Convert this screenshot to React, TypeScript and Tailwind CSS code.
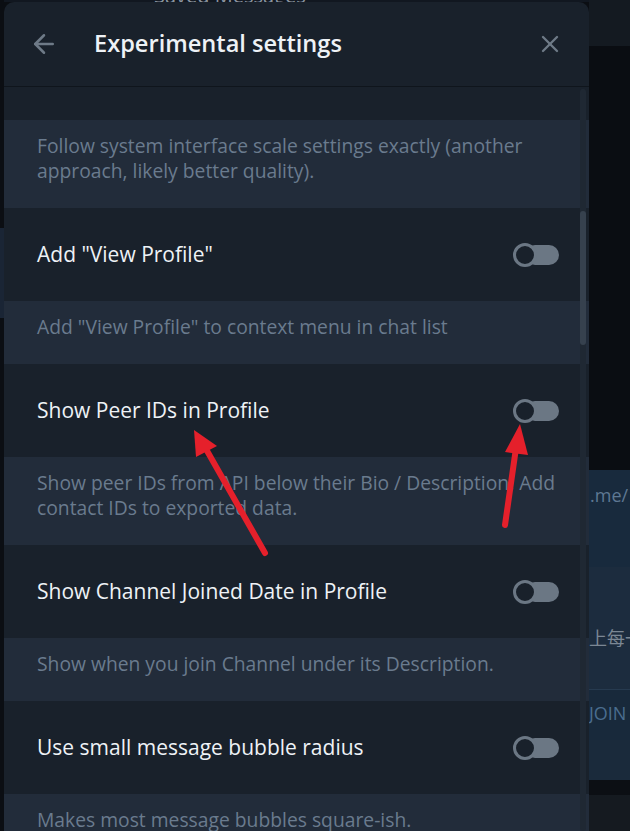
import { ArrowLeft, X } from "lucide-react";

const rows = [
  {
    title: "Add \"View Profile\"",
    desc: "Add \"View Profile\" to context menu in chat list",
  },
  {
    title: "Show Peer IDs in Profile",
    desc: "Show peer IDs from API below their Bio / Description. Add contact IDs to exported data.",
  },
  {
    title: "Show Channel Joined Date in Profile",
    desc: "Show when you join Channel under its Description.",
  },
  {
    title: "Use small message bubble radius",
    desc: "Makes most message bubbles square-ish.",
  },
];

function Toggle() {
  return (
    <div className="relative w-[46px] h-[24px] shrink-0">
      <div className="absolute left-[12px] top-[2px] w-[34px] h-[20px] rounded-full bg-[#6b7784]"></div>
      <div className="absolute left-0 top-0 w-[24px] h-[24px] rounded-full border-[3px] border-[#6b7784] bg-[#19212b]"></div>
    </div>
  );
}

function Row({ title }: { title: string }) {
  return (
    <div className="flex items-center justify-between h-[93px] pl-[33px] pr-[30px] bg-[#19212b]">
      <p className="text-[21px] text-[#eef2f6]">{title}</p>
      <Toggle />
    </div>
  );
}

function Desc({ text }: { text: string }) {
  return (
    <div className="bg-[#222c3a] pl-[33px] pr-[24px] pt-[13px] pb-[25px]">
      <p className="text-[19.3px] leading-[25px] text-[#6a7b8e]">{text}</p>
    </div>
  );
}

export default function App() {
  return (
    <div
      className="relative w-[630px] h-[831px] overflow-hidden bg-[#0b0e13] flex"
      style={{ fontFamily: "'Open Sans', 'Noto Sans CJK SC', sans-serif" }}
    >
      {/* left strip of the app behind */}
      <div className="w-[4px] shrink-0 flex flex-col">
        <div className="h-[228px] bg-[#0b0e13]"></div>
        <div className="h-[90px] bg-[#1a2535]"></div>
        <div className="flex-1 bg-[#0b0e13]"></div>
      </div>

      {/* dialog */}
      <div className="w-[585px] shrink-0 flex flex-col">
        <div className="h-[2px] bg-[#111720] overflow-hidden relative">
          <p className="absolute left-[150px] top-[-19px] text-[20px] text-[#8b95a1] whitespace-nowrap">Saved Messages</p>
        </div>
        <div className="flex-1 flex flex-col bg-[#19212b] rounded-t-[10px] overflow-hidden">
          <div className="h-[85px] shrink-0 flex items-center border-b border-[#0f151c]">
            <ArrowLeft className="ml-[25px] w-[30px] h-[30px] text-[#6e7a87]" strokeWidth={2} />
            <h1 className="ml-[35px] text-[23.6px] font-semibold text-[#eef2f6]">Experimental settings</h1>
            <X className="ml-auto mr-[25px] w-[28px] h-[28px] text-[#6e7a87]" strokeWidth={2} />
          </div>

          <div className="relative flex-1 overflow-hidden">
            <div className="mt-[-60px]">
              <Row title="Ignore system scaling" />
              <Desc text="Follow system interface scale settings exactly (another approach, likely better quality)." />
              {rows.map((r) => (
                <div key={r.title}>
                  <Row title={r.title} />
                  <Desc text={r.desc} />
                </div>
              ))}
            </div>
            {/* scrollbar */}
            <div className="absolute right-[3px] top-[2px] bottom-0 w-[6px] rounded-full bg-[#1f2833]">
              <div className="mt-[122px] h-[134px] rounded-full bg-[#36414e]"></div>
            </div>
          </div>
        </div>
      </div>

      {/* right strip of the app behind */}
      <div className="flex-1 flex flex-col overflow-hidden text-[18px] whitespace-nowrap">
        <div className="h-[46px] bg-[#141a21]"></div>
        <div className="h-[424px] bg-[#0a0d12]"></div>
        <div className="h-[97px] bg-[#182a3d] pl-[1px] pt-[12px] text-[#5e7893]">.me/</div>
        <div className="h-[123px] bg-[#1c2c3e] pt-[58px] text-[#7b8794] border-b border-[#263a4f]">上每一</div>
        <div className="h-[50px] bg-[#18293b] pt-[10px] text-[#4a6d8f]">JOIN</div>
        <div className="h-[40px] bg-[#1a2a3b]"></div>
        <div className="h-[15px] bg-[#0c0f14]"></div>
        <div className="flex-1 bg-[#151a20]"></div>
      </div>

      {/* red annotation arrows */}
      <svg className="absolute inset-0 pointer-events-none" width="630" height="831" viewBox="0 0 630 831">
        <line x1="265" y1="553" x2="206" y2="449" stroke="#e5202b" strokeWidth="6" strokeLinecap="round" />
        <polygon points="194,430 217,446 196,457" fill="#e5202b" />
        <line x1="505" y1="525" x2="516" y2="448" stroke="#e5202b" strokeWidth="6" strokeLinecap="round" />
        <polygon points="520,424 528,455 505,452" fill="#e5202b" />
      </svg>
    </div>
  );
}
